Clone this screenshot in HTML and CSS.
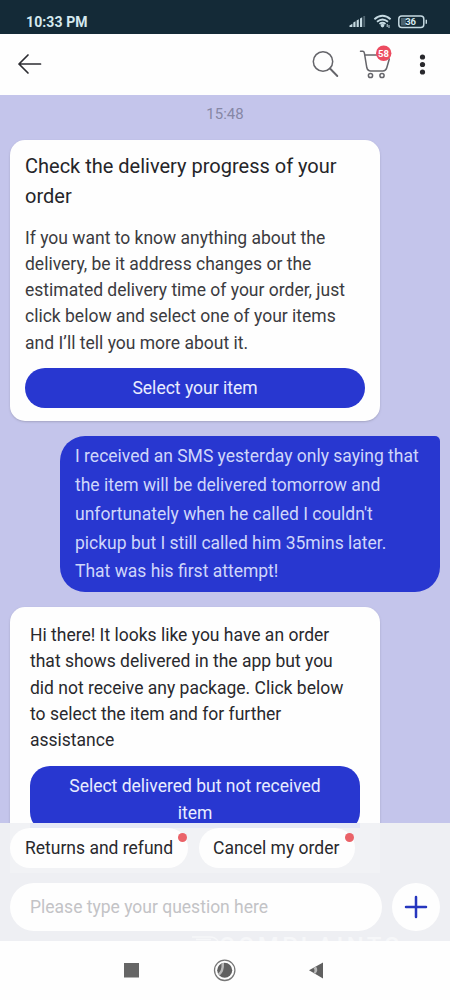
FILE: index.html
```html
<!DOCTYPE html>
<html lang="en">
<head>
<meta charset="utf-8">
<title>Support chat</title>
<link rel="stylesheet" href="styles.css">
</head>
<body>
<div class="phone">
  <header class="status">
    <span class="clock">10:33 PM</span>
    <svg class="status-icons" width="82" height="18" viewBox="0 0 82 18">
      <g fill="#c6dae2">
        <path d="M1.500 13.500l2.900-1.800V15H1.500zM5.300 10.500l2.200-1.200V15H5.300zM8.600 8.500l2.200-1.300V15H8.600zM12 6.500l2.200-1.300V15H12z"/>
        <path d="M15.300 4h1.800v11h-1.800z" opacity=".35"/>
        <circle cx="34.500" cy="13.600" r="1.800"/>
        <path d="M38.700 12h1v3h-1zM40.500 13h1v3h-1z"/>
      </g>
      <g fill="none" stroke="#c6dae2" stroke-width="1.800">
        <path d="M26.400 7.300q8.100-7 16.200 0M29 9.800q5.500-4.600 11 0M31.500 12q3-2.500 6 0"/>
        <rect x="50.800" y="4" width="25" height="11.500" rx="3" stroke-width="1.500"/>
        <path d="M78.300 7.800v4" stroke-width="1.400"/>
      </g>
      <path d="M53 6h5v7.500h-5z" fill="#4b626f"/>
      <text class="battery" x="62.600" y="13.200" text-anchor="middle">36</text>
    </svg>
  </header>
  <nav class="toolbar">
    <svg width="26" height="26" viewBox="0 0 26 26" fill="none" stroke="#2d2d32" stroke-width="1.700" stroke-linecap="round" stroke-linejoin="round"><path d="M23.500 13H2M11 4L2 13l9 9"/></svg>
    <svg class="tools" width="120" height="40" viewBox="0 0 120 40">
      <g fill="none" stroke="#65656a" stroke-width="1.500" stroke-linecap="round">
        <circle cx="13" cy="17.500" r="9.700"/>
        <path d="M20 24.500l7.300 7.500" stroke-width="1.900"/>
        <path d="M50.500 7.300h2.200q1.300 0 1.700 1.800l2.400 14.400q.7 3.400 4 3.400h12.200q2.800 0 3.700-2.900l2.600-9M55 11h12"/>
        <circle cx="60.500" cy="31.500" r="2.100"/>
        <circle cx="72" cy="31.500" r="2.100"/>
      </g>
      <circle cx="73.700" cy="9.200" r="7.700" fill="#ec4b60"/>
      <text class="count" x="73.500" y="12.600" text-anchor="middle">58</text>
      <g fill="#29292d"><circle cx="112.500" cy="13" r="2.600"/><circle cx="112.500" cy="20.500" r="2.600"/><circle cx="112.500" cy="28" r="2.600"/></g>
    </svg>
  </nav>
  <main class="chat">
    <time class="time">15:48</time>
    <section class="card intro">
      <h1 class="title">Check the delivery progress of your<br>order</h1>
      <p class="copy">If you want to know anything about the<br>delivery, be it address changes or the<br>estimated delivery time of your order, just<br>click below and select one of your items<br>and I’ll tell you more about it.</p>
      <div class="button">Select your item</div>
    </section>
    <section class="mine">I received an SMS yesterday only saying that<br>the item will be delivered tomorrow and<br>unfortunately when he called I couldn't<br>pickup but I still called him 35mins later.<br>That was his first attempt!</section>
    <section class="card reply">
      <p class="copy">Hi there! It looks like you have an order<br>that shows delivered in the app but you<br>did not receive any package. Click below<br>to select the item and for further<br>assistance</p>
      <div class="button tall">Select delivered but not received<br>item</div>
    </section>
  </main>
  <footer class="composer">
    <div class="chips">
      <div class="chip">Returns and refund<i class="dot"></i></div>
      <div class="chip second">Cancel my order<i class="dot"></i></div>
    </div>
    <div class="entry">
      <div class="field">Please type your question here</div>
      <div class="add"><svg width="24" height="24" viewBox="0 0 24 24" fill="none" stroke="#2636be" stroke-width="2.500" stroke-linecap="round"><path d="M12 2v20M2 12h20"/></svg></div>
    </div>
    <svg class="mark" width="216" height="7" viewBox="0 0 216 7"><path d="M2 3h18q5 0 8 4M6 5.500h15" fill="none" stroke="#fff" stroke-width="1.500"/><text class="mark-text" x="29" y="20" textLength="180">COMPLAINTS</text></svg>
  </footer>
  <div class="system">
    <svg width="450" height="59" viewBox="0 0 450 59">
      <path d="M124 22h15v14.500h-15z" fill="#666"/>
      <circle cx="224.700" cy="29.300" r="10.200" fill="none" stroke="#777" stroke-width="1.300"/>
      <circle cx="224.700" cy="29.300" r="7.500" fill="#606060"/>
      <path d="M218 32.500q4-3 3.500-10 2-.8 2.500-.7.500 9-4.500 13z" fill="#b9b9b9"/>
      <path d="M309 29.300L323 21.500v16z" fill="#606060"/>
      <path d="M313.500 27l2.500-1.500q3 4-1 7.500l-1.500-1q2-2.500 0-5z" fill="#b9b9b9"/>
    </svg>
  </div>
</div>
</body>
</html>
```
FILE: styles.css
```css
* { box-sizing: border-box; }
body { margin: 0; font-family: Roboto, sans-serif; }
.phone { width: 450px; height: 1000px; display: flex; flex-direction: column; overflow: hidden; background: #fefefe; white-space: nowrap; }
.status { height: 34px; flex: none; background: #142a37; display: flex; justify-content: space-between; padding: 12px 20px 0 26px; }
.clock { color: #d5e9ef; font-size: 14px; line-height: 20px; font-weight: 700; letter-spacing: .1px; }
.battery { fill: #d5e9ef; font-size: 9.5px; font-weight: 700; }
.toolbar { height: 60.5px; flex: none; display: flex; justify-content: space-between; align-items: flex-start; padding: 17px 20px 0 17px; background: #fefefe; }
.tools { flex: none; margin-top: -7.5px; }
.count { fill: #fff; font-size: 9.5px; font-weight: 700; }
.chat { height: 728.5px; flex: none; overflow: hidden; display: flex; flex-direction: column; background: #c4c5eb; }
.time { height: 45px; padding-top: 9.5px; flex: none; text-align: center; color: #8687a5; font-size: 15px; line-height: 21px; }
.card { width: 370px; margin-left: 10px; flex: none; background: #fefefe; border-radius: 15px; box-shadow: 0 1px 2px #85859d80; }
.intro { height: 281px; padding: 11px 15px 0; }
.title { margin: 0; font-size: 20px; line-height: 30px; font-weight: 400; color: #252529; }
.copy { margin: 0; font-size: 17.5px; line-height: 26.25px; color: #3b3b40; }
.intro .copy { margin-top: 14px; }
.reply .copy { color: #29292d; }
.button { height: 40px; margin-top: 12.5px; border-radius: 20px; background: #2837d0; color: #e8ecff; text-align: center; font-size: 17.5px; line-height: 41px; }
.mine { width: 380px; height: 156px; flex: none; margin: 15px 0 0 60px; padding: 6.7px 15px 0; background: #2837d0; border-radius: 25px 5px 25px 25px; color: #cfd6fa; font-size: 17.5px; line-height: 28.8px; }
.reply { height: 260px; margin-top: 15.5px; padding: 15px 20px 0; }
.button.tall { height: 66px; padding-top: 7.5px; line-height: 26.25px; }
.composer { height: 118px; flex: none; position: relative; background: #eeeff3; padding: 0 10px; }
.chips { display: flex; gap: 11px; width: 370px; height: 50px; padding-top: 5px; background: linear-gradient(#e5e8f7, #e5e8f7) 20px 0 / 330px 5px no-repeat #f1f2f5; }
.chip { position: relative; width: 178px; height: 40px; padding-left: 15px; background: #fefefe; border-radius: 20px; color: #29292d; font-size: 17.5px; line-height: 41px; }
.second { width: 156px; padding-left: 14px; }
.dot { position: absolute; right: 1px; top: 5px; width: 9px; height: 9px; border-radius: 50%; background: #ea6268; }
.entry { display: flex; justify-content: space-between; margin-top: 10px; }
.field { width: 372px; height: 48px; padding-left: 20px; border-radius: 24px; background: #fefefe; color: #c3c3c6; font-size: 17.5px; line-height: 49px; }
.add { width: 48px; height: 48px; border-radius: 50%; background: #fefefe; display: flex; align-items: center; justify-content: center; }
.mark { position: absolute; left: 190px; bottom: 0; opacity: .5; overflow: hidden; }
.mark-text { fill: #fff; font-size: 24px; font-weight: 500; }
.system { height: 59px; flex: none; background: #fefefe; }
```
